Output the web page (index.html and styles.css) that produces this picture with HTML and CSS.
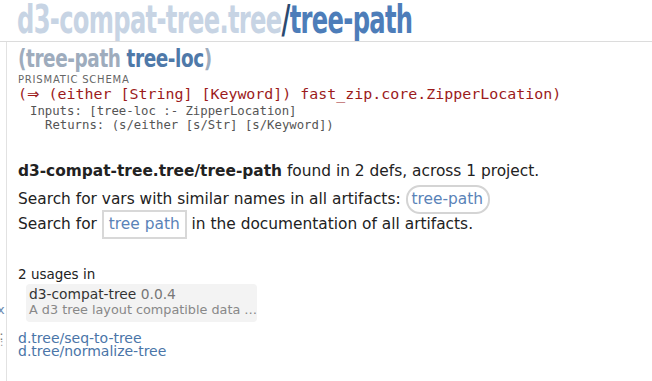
FILE: index.html
```html
<!DOCTYPE html>
<html>
<head>
<meta charset="utf-8">
<link rel="stylesheet" href="styles.css">
</head>
<body>
<header class="topbar">
  <h1 class="title"><span class="ns">d3-compat-tree.tree</span><span class="slash">/</span><span class="name">tree-path</span></h1>
</header>
<div class="layout">
  <aside class="sidebar">
    <div class="side-x">x</div>
    <div class="side-dots">..:</div>
    <div class="side-dots2">:</div>
  </aside>
  <main class="main">
    <h2 class="arglist"><span class="paren">(</span><span class="fn">tree-path</span> <span class="arg">tree-loc</span><span class="paren">)</span></h2>
    <div class="schema-label">PRISMATIC SCHEMA</div>
    <div class="schema-sig">(<span class="arrow">⇒</span> (either [String] [Keyword]) fast_zip.core.ZipperLocation)</div>
    <pre class="schema-detail"><span class="inputs">Inputs: [tree-loc :- ZipperLocation]</span>
<span class="returns">Returns: (s/either [s/Str] [s/Keyword])</span></pre>
    <section class="summary">
      <p class="line"><strong class="qual">d3-compat-tree.tree/tree-path</strong> found in 2 defs, across 1 project.</p>
      <p class="line">Search for vars with similar names in all artifacts: <a class="pill">tree-path</a></p>
      <p class="line">Search for <a class="box">tree path</a> in the documentation of all artifacts.</p>
    </section>
    <section class="usages">
      <div class="usages-head">2 usages in</div>
      <div class="card">
        <div class="card-title">d3-compat-tree <span class="ver">0.0.4</span></div>
        <div class="card-desc">A d3 tree layout compatible data …</div>
      </div>
      <div class="links">
        <a class="link">d.tree/seq-to-tree</a>
        <a class="link">d.tree/normalize-tree</a>
      </div>
    </section>
  </main>
</div>
</body>
</html>
```
FILE: styles.css
```css
html, body {
  margin: 0;
  padding: 0;
  background: #fff;
}
body {
  font-family: "DejaVu Sans", "Liberation Sans", sans-serif;
  font-size: 14px;
  color: #222;
  width: 652px;
  height: 381px;
  overflow: hidden;
}
.topbar {
  height: 41px;
  border-bottom: 1px solid #dcdcdc;
  padding-left: 17px;
}
.title {
  margin: -3px 0 0 0;
  font-family: "DejaVu Sans Condensed", "DejaVu Sans", sans-serif;
  font-stretch: condensed;
  font-weight: bold;
  font-size: 39px;
  line-height: 46px;
  letter-spacing: -1px;
  display: inline-block;
  transform: scaleX(0.69);
  transform-origin: left top;
  white-space: nowrap;
}
.ns { color: #c7d4e4; }
.slash { color: #2b4a70; }
.name { color: #4d7db9; }

.layout {
  display: flex;
  height: 339px;
}
.sidebar {
  width: 6px;
  border-right: 1px solid #e2e2e2;
  overflow: hidden;
  position: relative;
  font-size: 13px;
  color: #557;
}
.side-x {
  position: absolute;
  left: -3px;
  top: 260px;
  color: #6a8ab0;
}
.side-dots {
  position: absolute;
  left: -9px;
  top: 286px;
  color: #777;
}
.side-dots2 {
  position: absolute;
  left: 0;
  top: 295px;
  color: #999;
  font-size: 10px;
}
.main {
  padding-left: 11px;
  flex: 1;
}
.arglist {
  margin: 2px 0 0 0;
  font-family: "DejaVu Sans Condensed", "DejaVu Sans", sans-serif;
  font-stretch: condensed;
  font-weight: bold;
  font-size: 25px;
  line-height: 30px;
  letter-spacing: -0.5px;
  display: inline-block;
  transform: scaleX(0.82);
  transform-origin: left top;
  white-space: nowrap;
}
.paren, .fn { color: #9eacbd; }
.arg { color: #4f79a9; }

.schema-label {
  font-size: 10px;
  letter-spacing: 0.8px;
  color: #666;
  line-height: 10px;
  margin-top: 1px;
}
.schema-sig {
  font-family: "DejaVu Sans Mono", "Liberation Mono", monospace;
  font-size: 14.95px;
  color: #9c1b1b;
  line-height: 18px;
  white-space: nowrap;
}
.arrow {
  font-family: "DejaVu Sans", sans-serif;
}
.schema-detail {
  margin: 1px 0 0 12px;
  font-family: "DejaVu Sans Mono", "Liberation Mono", monospace;
  font-size: 12.3px;
  line-height: 14px;
  color: #555;
}
.returns {
  padding-left: 15px;
}
.summary {
  margin-top: 27px;
}
.line {
  margin: 0;
  font-size: 15.4px;
  line-height: 25.5px;
  height: 25.5px;
  white-space: nowrap;
}
.qual {
  font-weight: bold;
  color: #222;
}
.pill {
  display: inline-block;
  border: 2px solid #d4d4d4;
  border-radius: 14px;
  padding: 0 5px 0 4px;
  line-height: 25px;
  color: #5a83b8;
}
.box {
  display: inline-block;
  border: 2px solid #d8d8d8;
  padding: 0 5px;
  line-height: 25px;
  color: #5a83b8;
  margin-left: 0;
}
.usages {
  margin-top: 31px;
}
.usages-head {
  font-size: 13.5px;
  line-height: 15px;
  color: #222;
}
.card {
  margin: 2px 0 0 8px;
  width: 228px;
  background: #f3f3f3;
  border-radius: 4px;
  padding: 2px 0 4px 3px;
  font-size: 13.8px;
  line-height: 16px;
}
.card-title { color: #333; }
.ver { color: #777; }
.card-desc {
  color: #888;
  font-size: 12.8px;
  line-height: 16px;
  white-space: nowrap;
}
.links {
  margin-top: 10px;
  display: flex;
  flex-direction: column;
}
.link {
  color: #4a75a8;
  font-size: 14px;
  line-height: 13.5px;
}
```
